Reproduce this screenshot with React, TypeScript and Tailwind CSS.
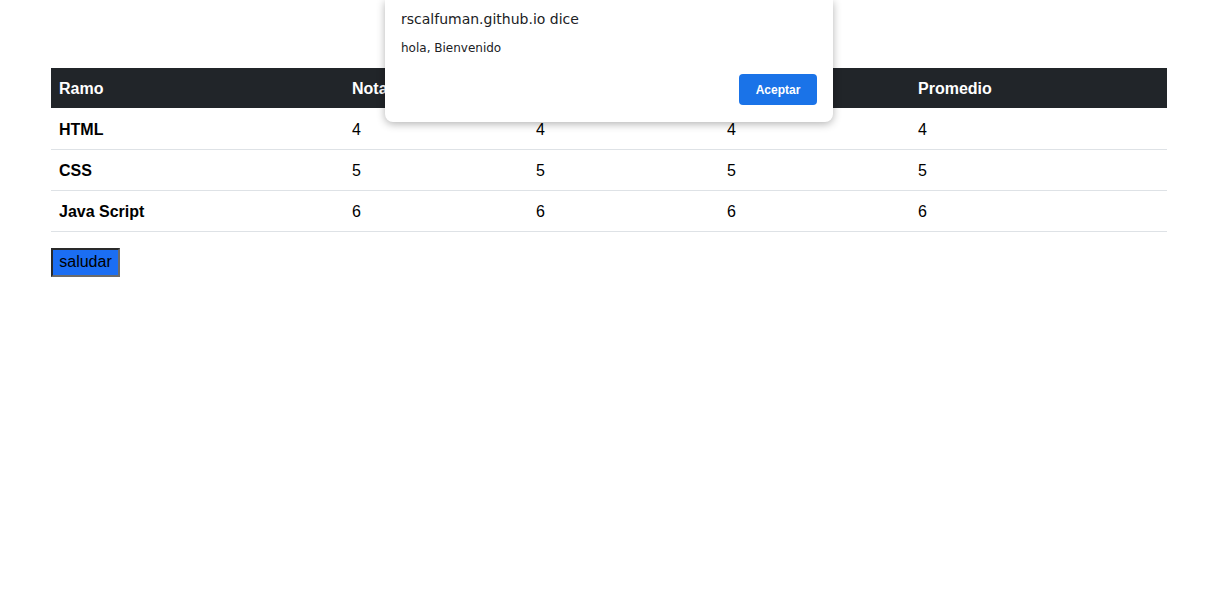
import React from "react";

const rows = [
  { ramo: "HTML", n: "4" },
  { ramo: "CSS", n: "5" },
  { ramo: "Java Script", n: "6" },
];

const widths = ["w-[293px]", "w-[184px]", "w-[191px]", "w-[191px]", "w-[257px]"];

export default function App() {
  return (
    <div className="relative min-h-[604px] bg-white font-['Liberation_Sans',Arial,sans-serif] text-black">
      <div className="pt-[68px] px-[51px] w-[1218px]">
        <table className="w-[1116px] table-fixed border-collapse text-[16px]">
          <thead>
            {/* the alert covers nota 2 / nota 3 */}
            <tr className="bg-[#212529] text-white h-[40px]">
              {["Ramo", "Nota 1", "", "", "Promedio"].map((h, i) => (
                <th key={i} className={`${widths[i]} px-2 pt-[2px] text-left font-bold`}>
                  {h}
                </th>
              ))}
            </tr>
          </thead>
          <tbody>
            {rows.map((r) => (
              <tr key={r.ramo} className="h-[41px] border-b border-[#dee2e6]">
                <td className="px-2 pt-[3px] font-bold">{r.ramo}</td>
                <td className="px-2 pt-[3px]">{r.n}</td>
                <td className="px-2 pt-[3px]">{r.n}</td>
                <td className="px-2 pt-[3px]">{r.n}</td>
                <td className="px-2 pt-[3px]">{r.n}</td>
              </tr>
            ))}
          </tbody>
        </table>
        <button className="mt-[16px] h-[29px] w-[69px] bg-[#1b6ef3] border-2 border-t-[#2a2a2a] border-l-[#2a2a2a] border-r-[#6b6b6b] border-b-[#6b6b6b] text-[16px] leading-none text-black">
          saludar
        </button>
      </div>

      {/* alert dialog */}
      <div className="absolute left-[385px] top-0 w-[448px] h-[122px] bg-white rounded-b-lg shadow-[0_2px_8px_rgba(0,0,0,0.3)] px-4 pt-[10px] font-['DejaVu_Sans',sans-serif]">
        <div className="text-[14px] text-[#202124] leading-[18px]">rscalfuman.github.io dice</div>
        <div className="mt-[12px] text-[12px] text-[#202124] leading-[16px]">hola, Bienvenido</div>
        <div className="flex justify-end mt-[18px]">
          <button className="w-[78px] h-[31px] rounded bg-[#1a73e8] text-white text-[12px] font-bold font-['Liberation_Sans',sans-serif]">
            Aceptar
          </button>
        </div>
      </div>
    </div>
  );
}
